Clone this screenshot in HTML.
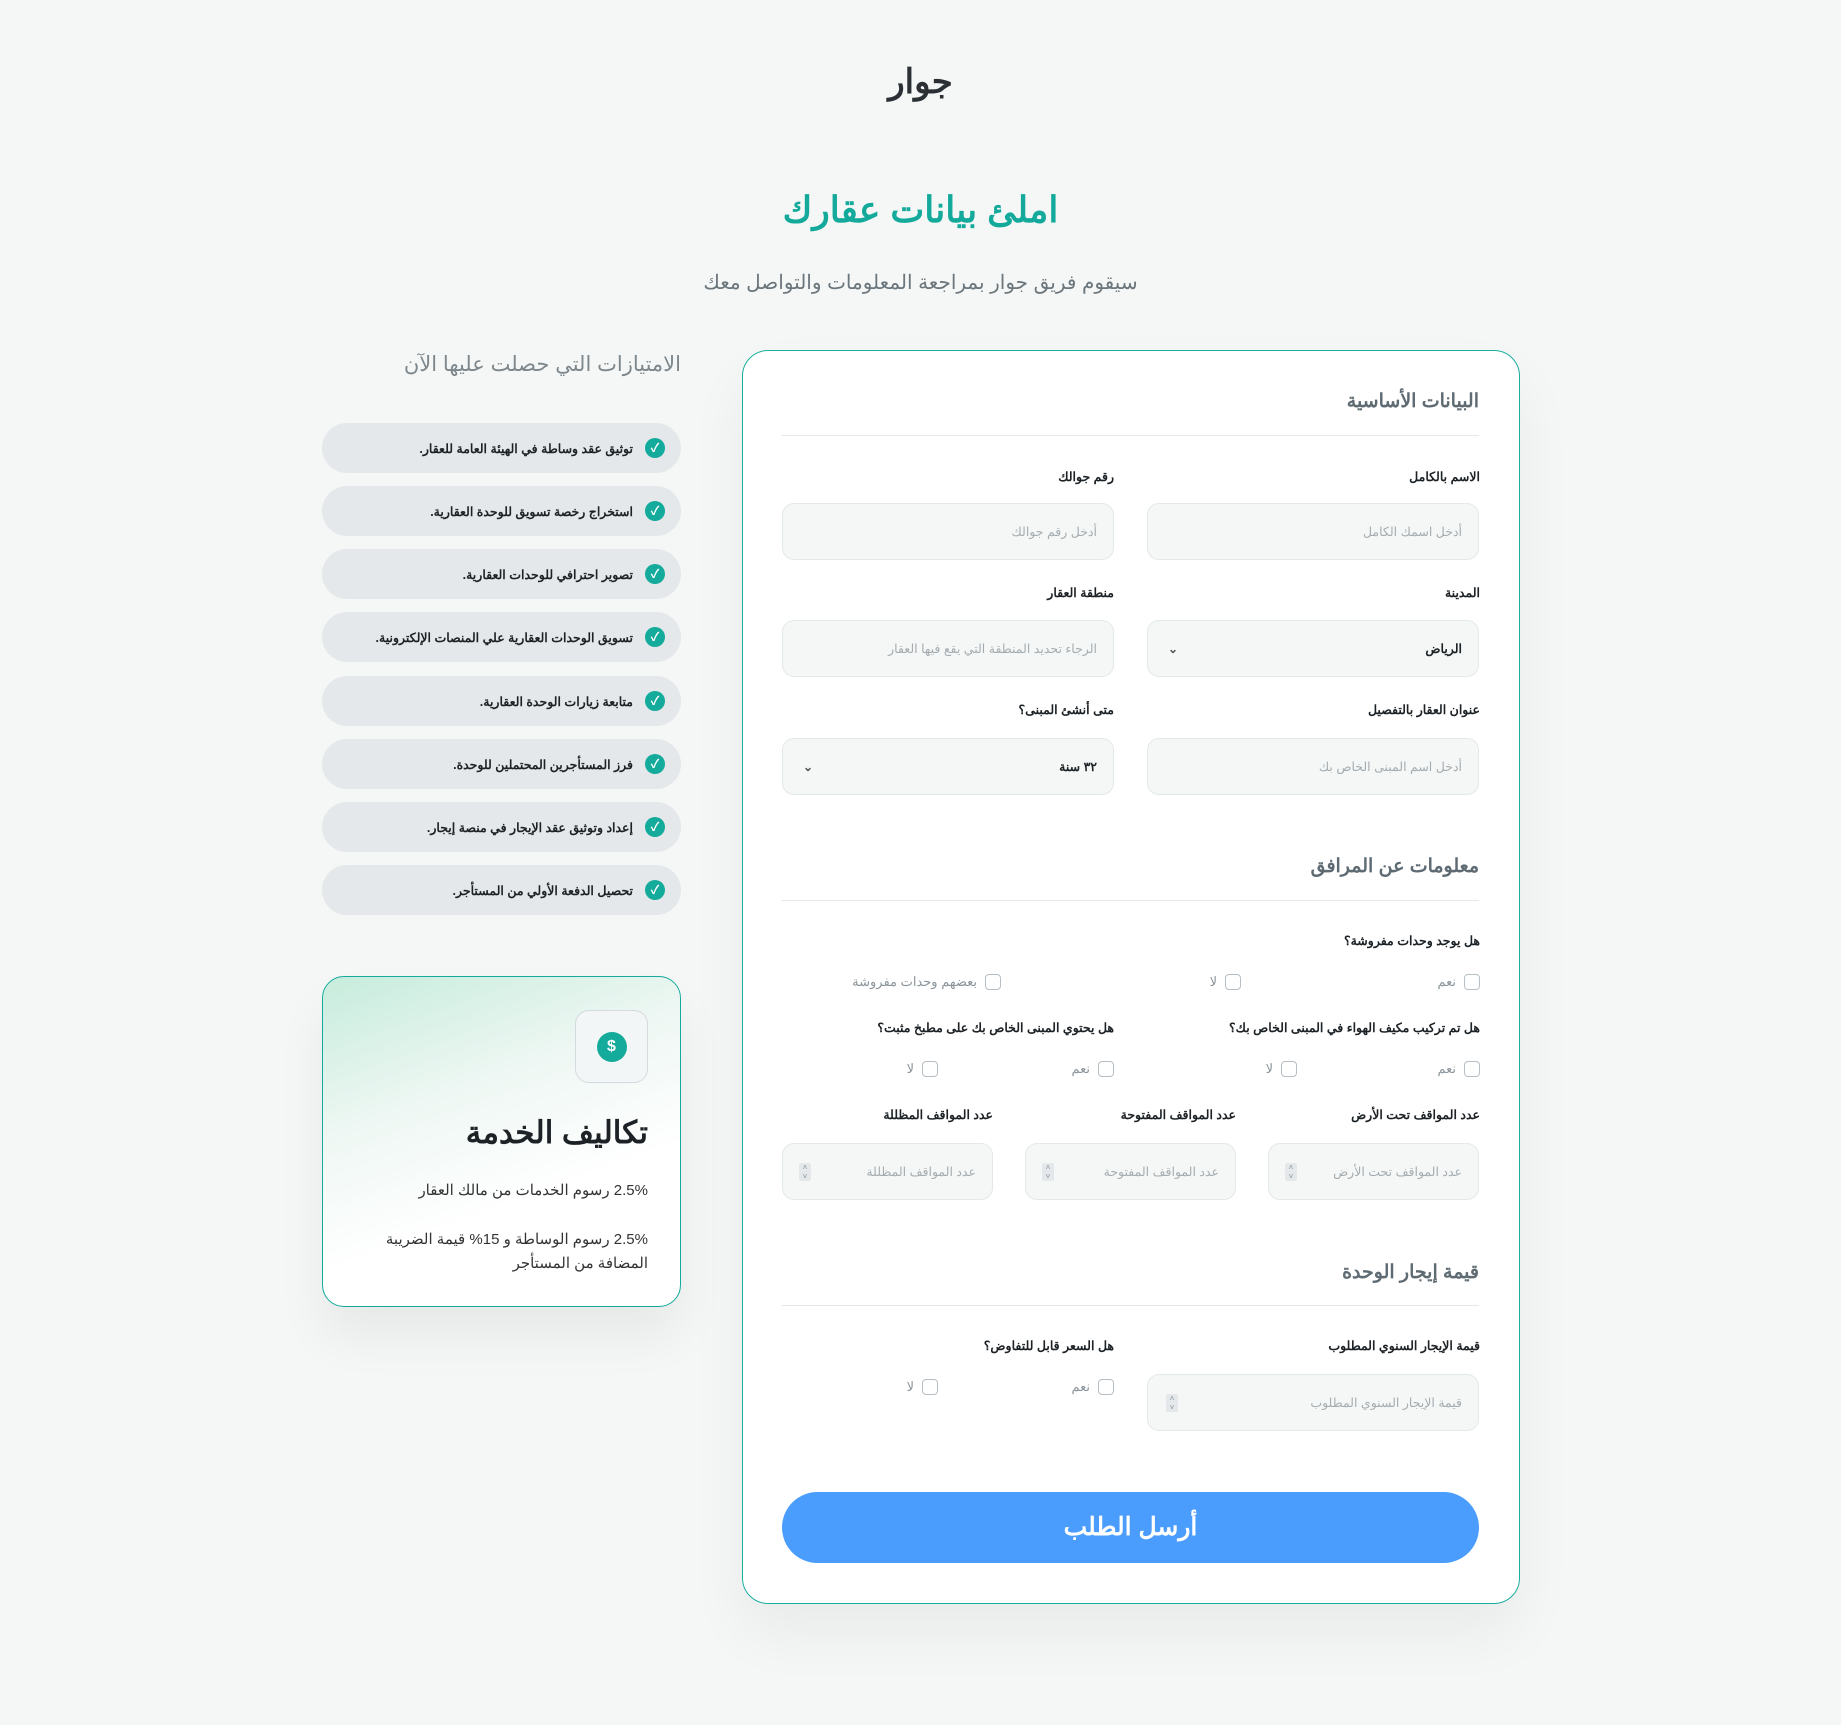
<!DOCTYPE html>
<html lang="ar" dir="rtl"><head><meta charset="utf-8"><style>
*{box-sizing:border-box;margin:0;padding:0}
body{width:1841px;height:1725px;background:#f5f7f6;font-family:"Liberation Sans","Noto Sans CJK SC",sans-serif;position:relative;overflow:hidden;color:#1c2226}
.a{position:absolute}
.c{position:absolute;left:0;width:1841px;text-align:center}
.lbl{position:absolute;font-size:12.5px;font-weight:bold;color:#1c2226;text-align:right;direction:rtl}
.inp{position:absolute;height:57px;background:#f5f7f7;border:1px solid #e3e8ea;border-radius:12px;font-size:12.5px;color:#a4acb0;direction:rtl;padding-right:16px;display:flex;align-items:center}
.sec{position:absolute;right:362px;font-size:19px;font-weight:bold;color:#5f6b73}
.line{position:absolute;left:782px;width:697px;height:1px;background:#e4e8ea}
.pill{position:absolute;left:322px;width:359px;height:50px;border-radius:25px;background:#e4e8ea;direction:rtl;display:flex;align-items:center;padding-right:16px;font-size:12.5px;font-weight:bold}
.chk{display:inline-block;width:20px;height:20px;border-radius:50%;background:#14aa9c;color:#fff;font-size:12px;text-align:center;line-height:20px;margin-left:12px}
.cb{position:absolute;font-size:13px;color:#8a949a;direction:rtl;display:flex;align-items:center;gap:8px}
.cb i{display:inline-block;width:16px;height:16px;border:1.5px solid #b7bfc4;border-radius:4px}
.sp{position:absolute;left:16px;top:19px;width:12px;height:18px;background:#e4e8ea;border-radius:2px;font-size:8px;color:#8a949a;text-align:center;line-height:9px}
</style></head><body>
<div class="c" style="top:62px;font-size:34px;font-weight:bold;color:#2a3034">جوار</div>
<div class="c" style="top:189px;font-size:36px;font-weight:bold;color:#13a99b">املئ بيانات عقارك</div>
<div class="c" style="top:270px;font-size:20px;color:#6b767c">سيقوم فريق جوار بمراجعة المعلومات والتواصل معك</div>

<div class="a" style="left:322px;width:359px;top:352px;text-align:right;font-size:21px;color:#7d878c">الامتيازات التي حصلت عليها الآن</div>
<div class="pill" style="top:423px"><span class="chk">✓</span>توثيق عقد وساطة في الهيئة العامة للعقار.</div>
<div class="pill" style="top:486px"><span class="chk">✓</span>استخراج رخصة تسويق للوحدة العقارية.</div>
<div class="pill" style="top:549px"><span class="chk">✓</span>تصوير احترافي للوحدات العقارية.</div>
<div class="pill" style="top:612px"><span class="chk">✓</span>تسويق الوحدات العقارية علي المنصات الإلكترونية.</div>
<div class="pill" style="top:676px"><span class="chk">✓</span>متابعة زيارات الوحدة العقارية.</div>
<div class="pill" style="top:739px"><span class="chk">✓</span>فرز المستأجرين المحتملين للوحدة.</div>
<div class="pill" style="top:802px"><span class="chk">✓</span>إعداد وتوثيق عقد الإيجار في منصة إيجار.</div>
<div class="pill" style="top:865px"><span class="chk">✓</span>تحصيل الدفعة الأولي من المستأجر.</div>

<div class="a" style="left:322px;top:976px;width:359px;height:331px;border:1px solid #14aa9c;border-radius:22px;background:linear-gradient(160deg,#c6ecdc 0%,#eef7f3 35%,#fff 65%);box-shadow:0 30px 50px rgba(0,0,0,.06)">
 <div class="a" style="left:252px;top:33px;width:73px;height:73px;border:1px solid #d4dadd;border-radius:14px;background:#f3f6f6;display:flex;align-items:center;justify-content:center"><div style="width:30px;height:30px;border-radius:50%;background:#14aa9c;color:#fff;font-weight:bold;text-align:center;line-height:30px;font-size:16px">$</div></div>
 <div class="a" style="right:32px;top:138px;font-size:31px;font-weight:bold;direction:rtl">تكاليف الخدمة</div>
 <div class="a" style="right:32px;top:204px;font-size:15px;direction:rtl;color:#333">2.5% رسوم الخدمات من مالك العقار</div>
 <div class="a" style="right:32px;top:251px;width:300px;font-size:15px;direction:rtl;color:#333;line-height:24px;text-align:right">2.5% رسوم الوساطة و 15% قيمة الضريبة المضافة من المستأجر</div>
</div>

<div class="a" style="left:742px;top:350px;width:778px;height:1254px;border:1px solid #1aaea0;border-radius:26px;background:#fff;box-shadow:0 30px 60px rgba(0,0,0,.05)"></div>
<div class="sec" style="top:390px">البيانات الأساسية</div>
<div class="line" style="top:435px"></div>
<div class="lbl" style="right:361px;top:469px">الاسم بالكامل</div>
<div class="lbl" style="right:727px;top:469px">رقم جوالك</div>
<div class="inp" style="left:1147px;width:332px;top:503px">أدخل اسمك الكامل</div>
<div class="inp" style="left:782px;width:332px;top:503px">أدخل رقم جوالك</div>
<div class="lbl" style="right:361px;top:585px">المدينة</div>
<div class="lbl" style="right:727px;top:585px">منطقة العقار</div>
<div class="inp" style="left:1147px;width:332px;top:620px;color:#1c2226;font-weight:bold">الرياض<span class="a" style="left:20px;font-size:12px;color:#555">⌄</span></div>
<div class="inp" style="left:782px;width:332px;top:620px">الرجاء تحديد المنطقة التي يقع فيها العقار</div>
<div class="lbl" style="right:361px;top:702px">عنوان العقار بالتفصيل</div>
<div class="lbl" style="right:727px;top:702px">متى أنشئ المبنى؟</div>
<div class="inp" style="left:1147px;width:332px;top:738px">أدخل اسم المبنى الخاص بك</div>
<div class="inp" style="left:782px;width:332px;top:738px;color:#1c2226;font-weight:bold">٣٢ سنة<span class="a" style="left:20px;font-size:12px;color:#555">⌄</span></div>

<div class="sec" style="top:855px">معلومات عن المرافق</div>
<div class="line" style="top:900px"></div>
<div class="lbl" style="right:361px;top:933px">هل يوجد وحدات مفروشة؟</div>
<div class="cb" style="right:361px;top:974px"><i></i>نعم</div>
<div class="cb" style="right:600px;top:974px"><i></i>لا</div>
<div class="cb" style="right:840px;top:974px"><i></i>بعضهم وحدات مفروشة</div>
<div class="lbl" style="right:361px;top:1020px">هل تم تركيب مكيف الهواء في المبنى الخاص بك؟</div>
<div class="lbl" style="right:727px;top:1020px">هل يحتوي المبنى الخاص بك على مطبخ مثبت؟</div>
<div class="cb" style="right:361px;top:1061px"><i></i>نعم</div>
<div class="cb" style="right:544px;top:1061px"><i></i>لا</div>
<div class="cb" style="right:727px;top:1061px"><i></i>نعم</div>
<div class="cb" style="right:903px;top:1061px"><i></i>لا</div>
<div class="lbl" style="right:361px;top:1107px">عدد المواقف تحت الأرض</div>
<div class="lbl" style="right:605px;top:1107px">عدد المواقف المفتوحة</div>
<div class="lbl" style="right:848px;top:1107px">عدد المواقف المظللة</div>
<div class="inp" style="left:1268px;width:211px;top:1143px">عدد المواقف تحت الأرض<span class="sp">˄<br>˅</span></div>
<div class="inp" style="left:1025px;width:211px;top:1143px">عدد المواقف المفتوحة<span class="sp">˄<br>˅</span></div>
<div class="inp" style="left:782px;width:211px;top:1143px">عدد المواقف المظللة<span class="sp">˄<br>˅</span></div>

<div class="sec" style="top:1261px">قيمة إيجار الوحدة</div>
<div class="line" style="top:1305px"></div>
<div class="lbl" style="right:361px;top:1338px">قيمة الإيجار السنوي المطلوب</div>
<div class="lbl" style="right:727px;top:1338px">هل السعر قابل للتفاوض؟</div>
<div class="inp" style="left:1147px;width:332px;top:1374px">قيمة الإيجار السنوي المطلوب<span class="sp" style="left:18px">˄<br>˅</span></div>
<div class="cb" style="right:727px;top:1379px"><i></i>نعم</div>
<div class="cb" style="right:903px;top:1379px"><i></i>لا</div>

<div class="a" style="left:782px;top:1492px;width:697px;height:71px;border-radius:36px;background:#4a9dfc;color:#fff;font-size:25px;font-weight:bold;text-align:center;line-height:71px">أرسل الطلب</div>
</body></html>
